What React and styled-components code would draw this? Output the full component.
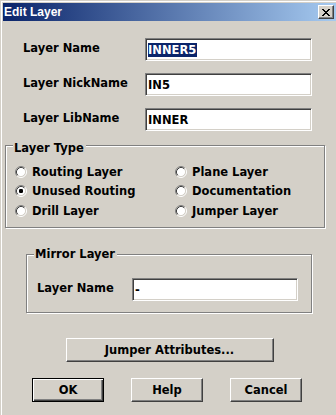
import React from "react";
import styled, { createGlobalStyle } from "styled-components";

const GlobalStyle = createGlobalStyle`
  body {
    margin: 0;
    background: #d4d0c8;
  }
`;

const Window = styled.div`
  width: 336px;
  height: 415px;
  box-sizing: border-box;
  background: #d4d0c8;
  border-top: 1px solid #d4d0c8;
  border-left: 1px solid #d4d0c8;
  box-shadow: inset 1px 1px #fff;
  padding: 2px 0 0 2px;
  font-family: "DejaVu Sans", sans-serif;
  font-weight: bold;
  font-size: 11.5px;
  color: #000;
  overflow: hidden;
  display: flex;
  flex-direction: column;
`;

const TitleBar = styled.div`
  height: 18px;
  flex-shrink: 0;
  display: flex;
  align-items: center;
  justify-content: space-between;
  padding: 0 2px 0 1px;
  background: linear-gradient(to right, #0a246a, #a6caf0);
  color: #fff;
  font-family: "Liberation Sans", Arial, sans-serif;
  font-size: 12px;
  font-weight: bold;
`;

const CloseButton = styled.div`
  width: 16px;
  height: 14px;
  box-sizing: border-box;
  background: #d4d0c8;
  border: 1px solid;
  border-color: #fff #404040 #404040 #fff;
  box-shadow: inset -1px -1px #808080;
  display: flex;
  align-items: center;
  justify-content: center;
  padding-right: 1px;
`;

const Fields = styled.div`
  display: grid;
  grid-template-columns: 122px 167px;
  row-gap: 12px;
  margin: 17px 0 0 20px;
`;

const Label = styled.div`
  padding-top: 3px;
  line-height: 14px;
  white-space: nowrap;
`;

const TextBox = styled.div`
  width: ${({ $w }) => $w || 167}px;
  height: 23px;
  box-sizing: border-box;
  background: #fff;
  border: 1px solid;
  border-color: #808080 #fff #fff #808080;
  box-shadow: inset 1px 1px #404040, inset -1px -1px #d4d0c8;
  padding: 0 2px 0 2px;
  display: flex;
  align-items: center;
  line-height: 14px;
  white-space: nowrap;
`;

const Selected = styled.span`
  background: #0a246a;
  color: #fff;
  line-height: 14px;
  padding-right: 1px;
`;

const Group = styled.div`
  position: relative;
  box-sizing: border-box;
  width: ${({ $w }) => $w}px;
  height: ${({ $h }) => $h}px;
  margin: ${({ $top }) => $top}px 0 0 ${({ $left }) => $left}px;
  border: 1px solid #808080;
  box-shadow: inset 1px 1px #fff, 1px 1px #fff;
`;

const Legend = styled.span`
  position: absolute;
  top: ${({ $dy }) => $dy}px;
  left: 7px;
  padding: 0 2px 0 1px;
  background: #d4d0c8;
  line-height: 14px;
  white-space: nowrap;
`;

const RadioGrid = styled.div`
  display: grid;
  grid-template-columns: 160px 1fr;
  grid-auto-rows: 19.5px;
  padding: 16px 0 0 9px;
`;

const RadioItem = styled.label`
  display: flex;
  align-items: center;
  gap: 5px;
  white-space: nowrap;
  line-height: 14px;
`;

const MirrorRow = styled.div`
  display: flex;
  align-items: flex-start;
  padding: 23px 0 0 10px;
`;

const MirrorLabel = styled(Label)`
  width: 95px;
`;

const Button = styled.div`
  width: ${({ $w }) => $w}px;
  height: 24px;
  box-sizing: border-box;
  background: #d4d0c8;
  border: 1px solid;
  border-color: ${({ $default }) =>
    $default ? "#000" : "#fff #404040 #404040 #fff"};
  box-shadow: ${({ $default }) =>
    $default
      ? "inset 1px 1px #fff, inset -1px -1px #404040, inset -2px -2px #808080"
      : "inset -1px -1px #808080"};
  display: flex;
  align-items: center;
  justify-content: center;
  line-height: 14px;
  white-space: nowrap;
`;

const JumperButton = styled(Button)`
  align-self: center;
  margin-top: 25px;
`;

const ButtonRow = styled.div`
  display: flex;
  gap: 27px;
  margin: 16px 0 0 29px;
`;

const Radio = ({ checked }) => (
  <svg width="12" height="12" viewBox="0 0 12 12">
    <circle cx="6" cy="6" r="4.5" fill="#fff" />
    <path d="M2.11 9.89A5.5 5.5 0 0 1 9.89 2.11" stroke="#808080" fill="none" />
    <path d="M9.89 2.11A5.5 5.5 0 0 1 2.11 9.89" stroke="#fff" fill="none" />
    <path d="M2.82 9.18A4.5 4.5 0 0 1 9.18 2.82" stroke="#404040" fill="none" />
    <path d="M9.18 2.82A4.5 4.5 0 0 1 2.82 9.18" stroke="#d4d0c8" fill="none" />
    {checked && <rect x="4" y="4" width="4" height="4" rx="1.2" fill="#000" />}
  </svg>
);

const CloseIcon = () => (
  <svg width="8" height="7" viewBox="0 0 8 7">
    <path
      fill="#000"
      d="M0 0h2v1H0zM6 0h2v1H6zM1 1h2v1H1zM5 1h2v1H5zM2 2h4v1H2zM3 3h2v1H3zM2 4h4v1H2zM1 5h2v1H1zM5 5h2v1H5zM0 6h2v1H0zM6 6h2v1H6z"
    />
  </svg>
);

const layerTypes = [
  ["Routing Layer", false],
  ["Plane Layer", false],
  ["Unused Routing", true],
  ["Documentation", false],
  ["Drill Layer", false],
  ["Jumper Layer", false],
];

export default function App() {
  return (
    <>
      <GlobalStyle />
      <Window>
        <TitleBar>
          <span>Edit Layer</span>
          <CloseButton>
            <CloseIcon />
          </CloseButton>
        </TitleBar>

        <Fields>
          <Label>Layer Name</Label>
          <TextBox>
            <Selected>INNER5</Selected>
          </TextBox>
          <Label>Layer NickName</Label>
          <TextBox>IN5</TextBox>
          <Label>Layer LibName</Label>
          <TextBox>INNER</TextBox>
        </Fields>

        <Group $w={320} $h={83} $top={14} $left={2}>
          <Legend $dy={-5}>Layer Type</Legend>
          <RadioGrid>
            {layerTypes.map(([name, checked]) => (
              <RadioItem key={name}>
                <Radio checked={checked} />
                {name}
              </RadioItem>
            ))}
          </RadioGrid>
        </Group>

        <Group $w={286} $h={59} $top={26} $left={23}>
          <Legend $dy={-8}>Mirror Layer</Legend>
          <MirrorRow>
            <MirrorLabel>Layer Name</MirrorLabel>
            <TextBox $w={166}>-</TextBox>
          </MirrorRow>
        </Group>

        <JumperButton $w={208}>Jumper Attributes...</JumperButton>

        <ButtonRow>
          <Button $w={72} $default>
            OK
          </Button>
          <Button $w={72}>Help</Button>
          <Button $w={72}>Cancel</Button>
        </ButtonRow>
      </Window>
    </>
  );
}
